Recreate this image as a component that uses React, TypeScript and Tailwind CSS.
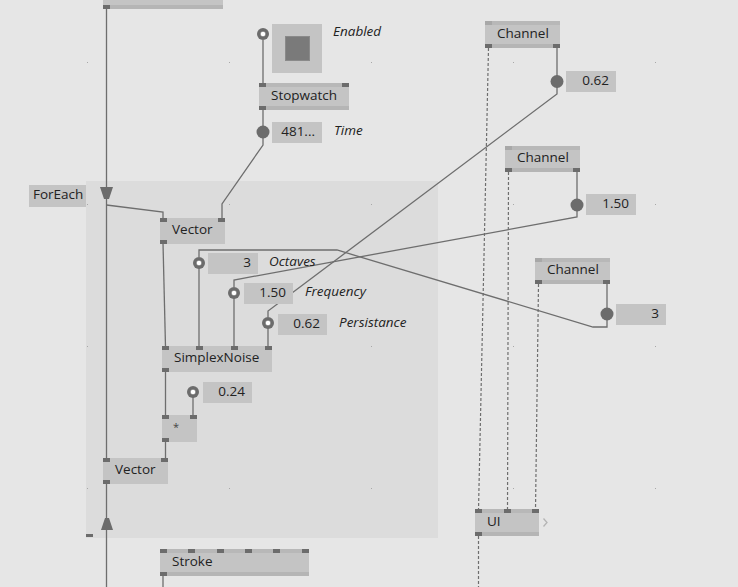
import React from "react";

type NodeProps = {
  x: number;
  y: number;
  w: number;
  h?: number;
  label?: string;
  top?: number[];
  topLight?: number[];
  bottom?: number[];
  stripeTop?: boolean;
  stripeBottom?: boolean;
};

function Node({ x, y, w, h = 26, label, top = [], topLight = [], bottom = [], stripeTop, stripeBottom }: NodeProps) {
  return (
    <div className="absolute bg-[#c4c4c4]" style={{ left: x, top: y, width: w, height: h }}>
      {stripeTop && <div className="absolute left-0 right-0 top-0 h-[4px] bg-[#b8b8b8]" />}
      {stripeBottom && <div className="absolute left-0 right-0 bottom-0 h-[4px] bg-[#b5b5b5]" />}
      {top.map((p) => (
        <div key={"t" + p} className="absolute top-0 h-[4px] w-[7px] bg-[#6c6c6c]" style={{ left: p }} />
      ))}
      {topLight.map((p) => (
        <div key={"l" + p} className="absolute top-0 h-[4px] w-[7px] bg-[#a8a8a8]" style={{ left: p }} />
      ))}
      {bottom.map((p) => (
        <div key={"b" + p} className="absolute bottom-0 h-[4px] w-[7px] bg-[#6c6c6c]" style={{ left: p }} />
      ))}
      {label && (
        <div className="absolute inset-0 flex items-center pb-[2px] pl-[12px] text-[13.5px] leading-none text-[#222222]">
          {label}
        </div>
      )}
    </div>
  );
}

function Value({ x, y, v, w = 50 }: { x: number; y: number; v: string; w?: number }) {
  return (
    <div
      className="absolute flex h-[21px] items-center justify-end bg-[#c4c4c4] pb-[1px] pr-[7px] text-[13.5px] leading-none text-[#222222]"
      style={{ left: x, top: y, width: w }}
    >
      {v}
    </div>
  );
}

function Label({ x, y, t }: { x: number; y: number; t: string }) {
  return (
    <div className="absolute text-[13.5px] italic leading-none text-[#222222]" style={{ left: x, top: y }}>
      {t}
    </div>
  );
}

const gridX = [87, 229, 371, 513, 655];
const gridY = [62, 204, 346, 488];

export default function App() {
  const wire = "#6e6e6e";
  return (
    <div
      className="relative h-[587px] w-[738px] overflow-hidden bg-[#e6e6e6]"
      style={{ fontFamily: '"Open Sans", "Noto Sans", "DejaVu Sans", sans-serif' }}
    >
      {/* ForEach region */}
      <div className="absolute left-[86px] top-[181px] h-[357px] w-[352px] bg-[#dcdcdc]" />
      <div className="absolute left-[86px] top-[534px] h-[3px] w-[7px] bg-[#6c6c6c]" />

      <svg className="absolute inset-0" width={738} height={587}>
        {gridX.map((gx) =>
          gridY.map((gy) => <rect key={gx + "-" + gy} x={gx} y={gy} width={1} height={1} fill="#a8a8a8" />)
        )}
        <g stroke={wire} strokeWidth={1.3} fill="none">
          <path d="M106.5,5 V587" />
          <path d="M106.5,205 L163,212 V219" />
          <path d="M263,40 V84" />
          <path d="M263,109 V127" />
          <path d="M263,138 V145 L222,204 V219" />
          <path d="M163,243 L165.5,347" />
          <path d="M199,257 V250 H337 L593,327 H607 V319" />
          <path d="M199,268 V347" />
          <path d="M577,211 V217 L234,280 V287" />
          <path d="M234,298 V347" />
          <path d="M557,87 V94 L268,311 V317" />
          <path d="M268,328 V347" />
          <path d="M165.5,371 V416" />
          <path d="M193,397 V416" />
          <path d="M165.5,441 V459" />
          <path d="M163,575 V587" />
          <path d="M557,47 V76" />
          <path d="M577,171 V200" />
          <path d="M607,283 V309" />
        </g>
        <g stroke="#6e6e6e" strokeWidth={1.2} strokeDasharray="3 2" fill="none">
          <path d="M488.5,48 L478.5,510" />
          <path d="M508.5,172 L507.5,510" />
          <path d="M538.5,284 L535.5,510" />
          <path d="M478.5,536 V587" />
        </g>
        {/* region triangles */}
        <polygon points="100,187 113,187 109,199 104,199" fill="#6c6c6c" />
        <polygon points="105,518 109,518 113,530 101,530" fill="#6c6c6c" />
        {/* output pins */}
        <circle cx={557} cy={81.5} r={6.5} fill="#6c6c6c" />
        <circle cx={577} cy={205} r={6.5} fill="#6c6c6c" />
        <circle cx={607} cy={314} r={6.5} fill="#6c6c6c" />
        <circle cx={263} cy={132} r={6.5} fill="#6c6c6c" />
        {/* input pins */}
        {[
          [263, 34],
          [199, 263],
          [234, 293],
          [268, 323],
          [193, 392],
        ].map(([cx, cy]) => (
          <g key={cx + "," + cy}>
            <circle cx={cx} cy={cy} r={6} fill="#6c6c6c" />
            <circle cx={cx} cy={cy} r={2.8} fill="#ffffff" stroke="#555555" strokeWidth={0.6} />
          </g>
        ))}
        {/* UI chevron */}
        <path d="M543.5,518.5 L547,522.5 L543.5,526.5" stroke="#b4b4b4" strokeWidth={1.3} fill="none" />
      </svg>

      {/* top cut-off node */}
      <Node x={103} y={-18} w={120} h={27} stripeBottom bottom={[0]} />

      {/* Enabled toggle */}
      <div className="absolute left-[272px] top-[24px] flex h-[49px] w-[50px] items-center justify-center bg-[#c4c4c4]">
        <div className="h-[25px] w-[25px] border border-[#8a8a8a] bg-[#7a7a7a]" />
      </div>
      <Label x={333} y={25} t="Enabled" />

      <Node x={259} y={83} w={90} h={27} label="Stopwatch" stripeTop stripeBottom top={[0, 83]} bottom={[0]} />
      <Value x={272} y={122} w={50} v="481..." />
      <Label x={334} y={124} t="Time" />

      {/* ForEach */}
      <div className="absolute left-[29px] top-[185px] flex h-[22px] w-[57px] items-center bg-[#c4c4c4] pb-[2px] pl-[4px] text-[13.5px] leading-none text-[#222222]">
        ForEach
      </div>

      <Node x={160} y={218} w={65} label="Vector" top={[0, 58]} bottom={[0]} />

      <Value x={208} y={253} v="3" />
      <Label x={269} y={255} t="Octaves" />
      <Value x={244} y={283} w={49} v="1.50" />
      <Label x={305} y={285} t="Frequency" />
      <Value x={278} y={314} w={49} v="0.62" />
      <Label x={339} y={316} t="Persistance" />

      <Node x={162} y={346} w={110} label="SimplexNoise" top={[0, 34, 69, 103]} bottom={[0]} />
      <Value x={203} y={382} w={49} v="0.24" />
      <Node x={162} y={415} w={35} h={27} top={[0, 28]} bottom={[0]} />
      <div className="absolute left-[173px] top-[421px] text-[11px] leading-none text-[#444]">*</div>

      <Node x={103} y={458} w={65} label="Vector" top={[0, 58]} bottom={[0]} />

      <Node x={160} y={549} w={149} h={27} label="Stroke" stripeTop stripeBottom top={[0, 28, 57, 85, 113, 142]} bottom={[0]} />

      {/* Channels */}
      <Node x={485} y={21} w={75} h={27} label="Channel" stripeTop stripeBottom topLight={[0]} bottom={[0, 68]} />
      <Value x={566} y={71} w={50} v="0.62" />
      <Node x={505} y={146} w={75} h={26} label="Channel" stripeTop stripeBottom topLight={[0]} bottom={[0, 68]} />
      <Value x={586} y={194} w={50} v="1.50" />
      <Node x={535} y={258} w={75} h={26} label="Channel" stripeTop stripeBottom topLight={[0]} bottom={[0, 68]} />
      <Value x={616} y={304} w={50} v="3" />

      <Node x={475} y={509} w={64} h={27} label="UI" stripeTop stripeBottom top={[0, 29, 57]} bottom={[0]} />
    </div>
  );
}
